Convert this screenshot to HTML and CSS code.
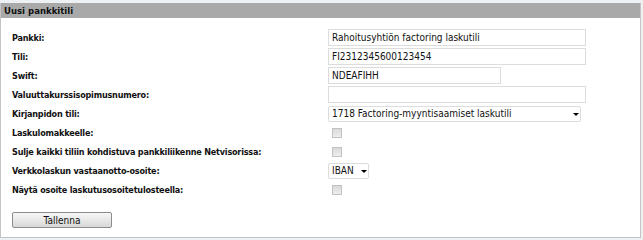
FILE: index.html
```html
<!DOCTYPE html>
<html lang="fi">
<head>
  <meta charset="UTF-8" />
  <title>Uusi pankkitili</title>
  <link rel="stylesheet" href="styles.css">
</head>
<body>
  <div class="panel">
    <div class="panel-head">Uusi pankkitili</div>
    <form class="bank-form">
      <div class="rows">
        <label>Pankki:</label>
        <div><input type="text" class="field wide" value="Rahoitusyhtiön factoring laskutili"></div>

        <label>Tili:</label>
        <div><input type="text" class="field wide" value="FI2312345600123454"></div>

        <label>Swift:</label>
        <div><input type="text" class="field short" value="NDEAFIHH"></div>

        <label>Valuuttakurssisopimusnumero:</label>
        <div><input type="text" class="field wide" value=""></div>

        <label>Kirjanpidon tili:</label>
        <div><span class="select-wrap account"><select class="choice"><option>1718 Factoring-myyntisaamiset laskutili</option></select></span></div>

        <label>Laskulomakkeelle:</label>
        <div><input type="checkbox" class="check"></div>

        <label>Sulje kaikki tiliin kohdistuva pankkiliikenne Netvisorissa:</label>
        <div><input type="checkbox" class="check"></div>

        <label>Verkkolaskun vastaanotto-osoite:</label>
        <div><span class="select-wrap iban"><select class="choice"><option>IBAN</option></select></span></div>

        <label>Näytä osoite laskutusosoitetulosteella:</label>
        <div><input type="checkbox" class="check"></div>
      </div>
      <button type="button" class="save">Tallenna</button>
    </form>
  </div>
</body>
</html>
```

FILE: styles.css
```css
* {
  box-sizing: border-box;
}
body {
  margin: 0;
  padding: 3px 2px 3px 0;
  background: #eef1f4;
  font-family: Tahoma, "DejaVu Sans Condensed", "DejaVu Sans", sans-serif;
  font-size: 9px;
  color: #111;
}
.panel {
  background: #fff;
  border: 1px solid #c4c4c4;
  border-top: none;
}
.panel-head {
  background: #a9a9a9;
  height: 15px;
  line-height: 15px;
  padding-left: 3px;
  font-weight: bold;
  font-size: 9.5px;
  color: #111;
}
.bank-form {
  padding: 10px 0 9px 11px;
}
.rows {
  display: grid;
  grid-template-columns: 316px 1fr;
  grid-auto-rows: 19px;
  align-items: center;
}
.rows label {
  font-weight: bold;
  letter-spacing: -0.2px;
  white-space: nowrap;
}
.field {
  display: block;
  height: 17px;
  border: 1px solid #dcdcdc;
  padding: 0 3px;
  font: inherit;
  font-size: 10px;
  color: #111;
  outline: none;
}
.field.wide {
  width: 258px;
}
.field.short {
  width: 173px;
}
.select-wrap {
  position: relative;
  display: block;
}
.select-wrap::after {
  content: "";
  position: absolute;
  top: 7px;
  border-left: 3px solid transparent;
  border-right: 3px solid transparent;
  border-top: 3px solid #000;
}
.select-wrap.account {
  width: 253px;
}
.select-wrap.account::after {
  left: 245px;
}
.select-wrap.iban {
  width: 41px;
}
.select-wrap.iban::after {
  left: 33px;
}
.choice {
  appearance: none;
  -webkit-appearance: none;
  display: block;
  width: 100%;
  height: 16px;
  border: 1px solid #dcdcdc;
  border-radius: 2px;
  background: #fff;
  padding: 0 3px;
  font: inherit;
  font-size: 10px;
  color: #111;
  outline: none;
}
.check {
  appearance: none;
  -webkit-appearance: none;
  display: block;
  width: 10px;
  height: 10px;
  margin: 0 0 0 4px;
  border: 1px solid #c2c2c2;
  background: linear-gradient(#d9d9d9, #eeeeee);
}
.save {
  display: block;
  margin-top: 13px;
  width: 100px;
  height: 16px;
  border: 1px solid #8c8c8c;
  border-radius: 2px;
  background: linear-gradient(#f7f7f7, #d8d8d8);
  font: inherit;
  font-size: 10px;
  color: #111;
  padding: 0;
}
```
